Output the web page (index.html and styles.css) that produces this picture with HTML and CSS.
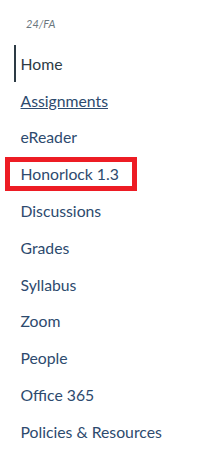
FILE: index.html
```html
<!DOCTYPE html>
<html>
<head>
<meta charset="utf-8">
<link rel="stylesheet" href="styles.css">
</head>
<body>
<div class="sidebar">
  <div class="term">24/FA</div>
  <nav class="course-nav">
    <a class="nav-item active" href="#">Home</a>
    <a class="nav-item underline" href="#">Assignments</a>
    <a class="nav-item" href="#">eReader</a>
    <a class="nav-item highlighted" href="#"><span class="box">Honorlock 1.3</span></a>
    <a class="nav-item" href="#">Discussions</a>
    <a class="nav-item" href="#">Grades</a>
    <a class="nav-item" href="#">Syllabus</a>
    <a class="nav-item" href="#">Zoom</a>
    <a class="nav-item" href="#">People</a>
    <a class="nav-item" href="#">Office 365</a>
    <a class="nav-item" href="#">Policies &amp; Resources</a>
  </nav>
</div>
</body>
</html>
```
FILE: styles.css
```css
html, body {
  margin: 0;
  padding: 0;
  background: #ffffff;
}
body {
  font-family: Lato, "Liberation Sans", sans-serif;
}
.sidebar {
  width: 221px;
  height: 474px;
  padding-top: 17px;
  box-sizing: border-box;
}
.term {
  font-size: 11px;
  font-style: italic;
  color: #6b7780;
  padding-left: 26px;
  line-height: 14px;
  height: 28px;
}
.course-nav {
  display: flex;
  flex-direction: column;
}
.nav-item {
  display: flex;
  align-items: center;
  height: 36.8px;
  font-size: 15.75px;
  color: #2d4a6e;
  text-decoration: none;
  border-left: 2px solid transparent;
  margin-left: 14px;
  padding-left: 4.5px;
}
.nav-item.active {
  border-left-color: #2d3b45;
  color: #2d3b45;
}
.nav-item.underline {
  text-decoration: underline;
}
.box {
  display: inline-block;
  line-height: 20px;
  position: relative;
}
.box::after {
  content: "";
  position: absolute;
  left: -16px;
  right: -18px;
  top: -7px;
  bottom: -7px;
  border: 5px solid #ed1c24;
}
```
